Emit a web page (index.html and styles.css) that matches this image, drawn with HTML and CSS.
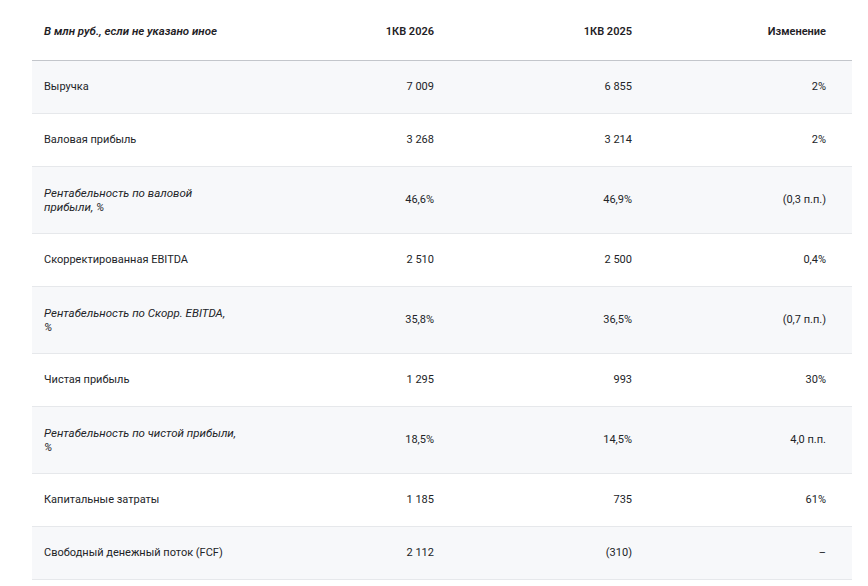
FILE: index.html
```html
<!DOCTYPE html>
<html lang="ru">
<head>
<meta charset="utf-8">
<link rel="stylesheet" href="styles.css">
</head>
<body>
<table class="fin">
  <colgroup>
    <col class="c1"><col class="c2"><col class="c3"><col class="c4">
  </colgroup>
  <thead>
    <tr>
      <th class="lbl"><em>В млн руб., если не указано иное</em></th>
      <th>1КВ 2026</th>
      <th>1КВ 2025</th>
      <th>Изменение</th>
    </tr>
  </thead>
  <tbody>
    <tr class="alt"><td class="lbl">Выручка</td><td>7 009</td><td>6 855</td><td>2%</td></tr>
    <tr><td class="lbl">Валовая прибыль</td><td>3 268</td><td>3 214</td><td>2%</td></tr>
    <tr class="alt tall"><td class="lbl it">Рентабельность по валовой<br>прибыли, %</td><td>46,6%</td><td>46,9%</td><td>(0,3 п.п.)</td></tr>
    <tr><td class="lbl">Скорректированная EBITDA</td><td>2 510</td><td>2 500</td><td>0,4%</td></tr>
    <tr class="alt tall"><td class="lbl it">Рентабельность по Скорр. EBITDA,<br>%</td><td>35,8%</td><td>36,5%</td><td>(0,7 п.п.)</td></tr>
    <tr><td class="lbl">Чистая прибыль</td><td>1 295</td><td>993</td><td>30%</td></tr>
    <tr class="alt tall"><td class="lbl it">Рентабельность по чистой прибыли,<br>%</td><td>18,5%</td><td>14,5%</td><td>4,0 п.п.</td></tr>
    <tr><td class="lbl">Капитальные затраты</td><td>1 185</td><td>735</td><td>61%</td></tr>
    <tr class="alt"><td class="lbl">Свободный денежный поток (FCF)</td><td>2 112</td><td>(310)</td><td>–</td></tr>
  </tbody>
</table>
</body>
</html>
```
FILE: styles.css
```css
html, body {
  margin: 0;
  padding: 0;
  background: #ffffff;
}
body {
  font-family: Roboto, "Liberation Sans", Arial, sans-serif;
  font-size: 11px;
  color: #222428;
  padding: 0 0 0 32px;
}
.fin {
  border-collapse: collapse;
  table-layout: fixed;
  width: 820px;
}
.c1 { width: 228px; }
.c2 { width: 200px; }
.c3 { width: 198px; }
.c4 { width: 194px; }
.fin th,
.fin td {
  text-align: right;
  padding: 0 26px 0 12px;
  line-height: 14px;
  vertical-align: middle;
}
.fin th {
  height: 57px;
  font-weight: 600;
  color: #1f2226;
  border-bottom: 1px solid #c3c6cb;
  padding-top: 3px;
}
.fin th.lbl em {
  font-style: italic;
  font-size: 11.5px;
  font-weight: 600;
}
.fin td {
  height: 52px;
  border-bottom: 1px solid #e6e8eb;
}
.fin tr.tall td {
  height: 66px;
}
.fin .lbl {
  text-align: left;
}
.fin td.lbl {
  padding-right: 8px;
}
.fin .it {
  font-style: italic;
  font-size: 11.5px;
}
.alt td {
  background: #f7f8fa;
}
```
